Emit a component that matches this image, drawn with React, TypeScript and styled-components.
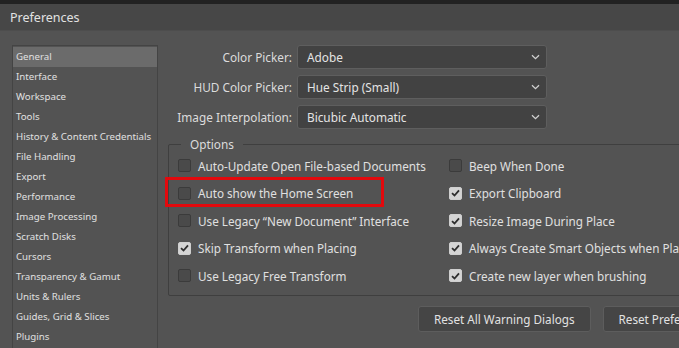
import React from 'react'
import styled, { createGlobalStyle } from 'styled-components'

const GlobalStyle = createGlobalStyle`
    html, body {
        margin: 0;
        padding: 0;
        background: #535353;
    }
    * {
        box-sizing: border-box;
    }
`

const Window = styled.div`
    width: 679px;
    height: 348px;
    overflow: hidden;
    background: #535353;
    font-family: "Noto Sans", "Open Sans", sans-serif;
    color: #dcdcdc;
    border-top: 4px solid #222222;
`

const TitleBar = styled.div`
    height: 27px;
    background: #474747;
    border-bottom: 1px solid #4d4d4d;
    padding-left: 10px;
    display: flex;
    align-items: center;
    font-size: 12.5px;
    color: #e2e2e2;
`

const Body = styled.div`
    display: flex;
    padding: 14px 0 0 12px;
    gap: 10px;
`

const Sidebar = styled.ul`
    list-style: none;
    margin: 0;
    padding: 1px 0 0 0;
    width: 146px;
    height: 320px;
    flex-shrink: 0;
    border: 1px solid #444444;
    background: #535353;
`

const SidebarItem = styled.li<{ $active?: boolean }>`
    height: 20px;
    line-height: 20px;
    padding-left: 3px;
    font-size: 9.7px;
    color: #e0e0e0;
    white-space: nowrap;
    background: ${p => (p.$active ? '#6b6b6b' : 'transparent')};
`

const Main = styled.div`
    flex: 1;
    display: flex;
    flex-direction: column;
`

const SelectGrid = styled.div`
    display: grid;
    grid-template-columns: 124px 250px;
    column-gap: 5px;
    row-gap: 6px;
    align-items: center;
`

const FieldLabel = styled.label`
    text-align: right;
    font-size: 11.8px;
    color: #dcdcdc;
    white-space: nowrap;
`

const Select = styled.div`
    height: 24px;
    border: 1px solid #5e5e5e;
    border-radius: 3px;
    background: #424242;
    display: flex;
    align-items: center;
    justify-content: space-between;
    padding: 0 6px 0 9px;
    font-size: 11.8px;
    color: #e4e4e4;
`

const Group = styled.fieldset`
    margin: 7px 0 0 0;
    padding: 7px 0 0 9px;
    width: 540px;
    height: 160px;
    border: 1px solid #3f3f3f;
    border-radius: 2px;
`

const Legend = styled.legend`
    margin-left: 3px;
    padding: 0 9px;
    font-size: 11.8px;
    color: #dcdcdc;
`

const OptionsGrid = styled.div`
    display: grid;
    grid-template-columns: 271px 300px;
    grid-auto-rows: 27.5px;
    margin-top: -7px;
`

const Option = styled.div`
    position: relative;
    display: flex;
    align-items: center;
    gap: 7px;
    font-size: 11.7px;
    color: #e0e0e0;
    white-space: nowrap;
`

const Highlight = styled.span`
    position: absolute;
    left: -13px;
    top: -3px;
    width: 219px;
    height: 30px;
    border: 3px solid #e3090d;
    pointer-events: none;
`

const Box = styled.span<{ $checked?: boolean }>`
    width: 13px;
    height: 13px;
    flex-shrink: 0;
    border-radius: 2px;
    border: 1px solid ${p => (p.$checked ? '#cfcfcf' : '#3b3b3b')};
    background: ${p => (p.$checked ? '#d4d4d4' : '#4a4a4a')};
    display: flex;
    align-items: center;
    justify-content: center;
`

const ButtonRow = styled.div`
    display: flex;
    gap: 12px;
    margin: 10px 0 0 250px;
`

const Button = styled.button`
    height: 26px;
    padding: 0 15px;
    flex-shrink: 0;
    border: 1px solid #5d5d5d;
    border-radius: 3px;
    background: #454545;
    color: #e2e2e2;
    font-family: inherit;
    font-size: 11.7px;
    white-space: nowrap;
`

const SIDEBAR = [
    'General',
    'Interface',
    'Workspace',
    'Tools',
    'History & Content Credentials',
    'File Handling',
    'Export',
    'Performance',
    'Image Processing',
    'Scratch Disks',
    'Cursors',
    'Transparency & Gamut',
    'Units & Rulers',
    'Guides, Grid & Slices',
    'Plugins',
]

const SELECTS = [
    { label: 'Color Picker:', value: 'Adobe' },
    { label: 'HUD Color Picker:', value: 'Hue Strip (Small)' },
    { label: 'Image Interpolation:', value: 'Bicubic Automatic' },
]

type OptionType = { text: string, checked: boolean, highlight?: boolean }

// row by row: left column, then right column
const OPTIONS: Array<OptionType> = [
    { text: 'Auto-Update Open File-based Documents', checked: false },
    { text: 'Beep When Done', checked: false },
    { text: 'Auto show the Home Screen', checked: false, highlight: true },
    { text: 'Export Clipboard', checked: true },
    { text: 'Use Legacy \u201CNew Document\u201D Interface', checked: false },
    { text: 'Resize Image During Place', checked: true },
    { text: 'Skip Transform when Placing', checked: true },
    { text: 'Always Create Smart Objects when Placing', checked: true },
    { text: 'Use Legacy Free Transform', checked: false },
    { text: 'Create new layer when brushing', checked: true },
]

function Chevron() {
    return (
        <svg width="9" height="6" viewBox="0 0 9 6">
            <path d="M1 1.2 L4.5 4.6 L8 1.2" fill="none" stroke="#d0d0d0" strokeWidth="1.3" />
        </svg>
    )
}

function Check() {
    return (
        <svg width="9" height="8" viewBox="0 0 9 8">
            <path d="M1 4.2 L3.5 6.5 L8 1.3" fill="none" stroke="#2e2e2e" strokeWidth="1.8" />
        </svg>
    )
}

export default function App() {
    return (
        <Window>
            <GlobalStyle />
            <TitleBar>Preferences</TitleBar>
            <Body>
                <Sidebar>
                    {SIDEBAR.map((item, i) => (
                        <SidebarItem key={item} $active={i === 0}>{item}</SidebarItem>
                    ))}
                </Sidebar>
                <Main>
                    <SelectGrid>
                        {SELECTS.map(s => (
                            <React.Fragment key={s.label}>
                                <FieldLabel>{s.label}</FieldLabel>
                                <Select>
                                    <span>{s.value}</span>
                                    <Chevron />
                                </Select>
                            </React.Fragment>
                        ))}
                    </SelectGrid>
                    <Group>
                        <Legend>Options</Legend>
                        <OptionsGrid>
                            {OPTIONS.map(o => (
                                <Option key={o.text}>
                                    {o.highlight && <Highlight />}
                                    <Box $checked={o.checked}>{o.checked && <Check />}</Box>
                                    {o.text}
                                </Option>
                            ))}
                        </OptionsGrid>
                    </Group>
                    <ButtonRow>
                        <Button>Reset All Warning Dialogs</Button>
                        <Button>Reset Preferences On Quit</Button>
                    </ButtonRow>
                </Main>
            </Body>
        </Window>
    )
}
